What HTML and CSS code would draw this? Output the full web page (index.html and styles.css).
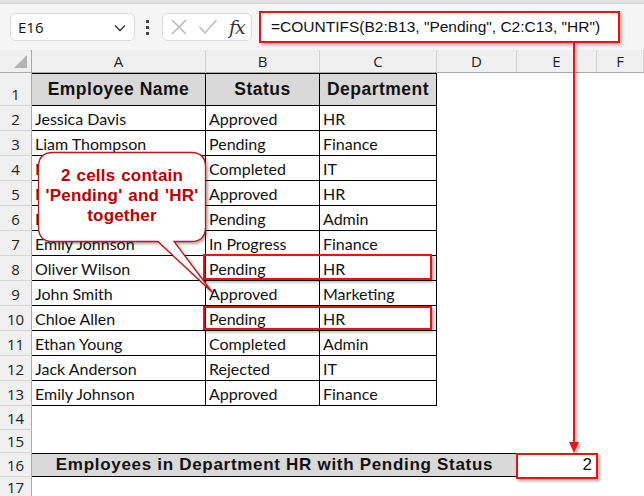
FILE: index.html
```html
<!DOCTYPE html>
<html>
<head>
<meta charset="utf-8">
<link rel="stylesheet" href="styles.css">
</head>
<body>
<div class="app">
  <div class="topstrip"></div>
  <div class="fbar">
    <div class="namebox">
      <span>E16</span>
      <svg class="chev" width="12" height="8" viewBox="0 0 12 8"><path d="M1 1.5 L6 6.5 L11 1.5" fill="none" stroke="#333" stroke-width="1.4"/></svg>
    </div>
    <div class="dots"><i></i><i></i><i></i></div>
    <div class="fxbox">
      <svg width="18" height="18" viewBox="0 0 18 18"><path d="M2 2 L16 16 M16 2 L2 16" stroke="#b9b9b9" stroke-width="1.5"/></svg>
      <svg width="20" height="18" viewBox="0 0 20 18"><path d="M1.5 9 L7 15 L18.5 2" fill="none" stroke="#b9b9b9" stroke-width="1.5"/></svg>
      <span class="fx">fx</span>
    </div>
    <div class="formula">=COUNTIFS(B2:B13, "Pending", C2:C13, "HR")</div>
  </div>

  <div class="sheet">
    <div class="r hc">
      <div class="corner"><span class="tri"></span></div>
      <div class="ch">A</div><div class="ch">B</div><div class="ch">C</div><div class="ch">D</div><div class="ch">E</div><div class="ch">F</div>
    </div>
    <div class="r h1">
      <div class="rh">1</div>
      <div class="t hd">Employee Name</div><div class="t hd">Status</div><div class="t hd">Department</div>
      <div class="c"></div><div class="c"></div><div class="c"></div>
    </div>
    <div class="r">
      <div class="rh">2</div><div class="t">Jessica Davis</div><div class="t">Approved</div><div class="t">HR</div><div class="c"></div><div class="c"></div><div class="c"></div>
    </div>
    <div class="r">
      <div class="rh">3</div><div class="t">Liam Thompson</div><div class="t">Pending</div><div class="t">Finance</div><div class="c"></div><div class="c"></div><div class="c"></div>
    </div>
    <div class="r">
      <div class="rh">4</div><div class="t">Noah Brown</div><div class="t">Completed</div><div class="t">IT</div><div class="c"></div><div class="c"></div><div class="c"></div>
    </div>
    <div class="r">
      <div class="rh">5</div><div class="t">Mia Clark</div><div class="t">Approved</div><div class="t">HR</div><div class="c"></div><div class="c"></div><div class="c"></div>
    </div>
    <div class="r">
      <div class="rh">6</div><div class="t">Lucas Martin</div><div class="t">Pending</div><div class="t">Admin</div><div class="c"></div><div class="c"></div><div class="c"></div>
    </div>
    <div class="r">
      <div class="rh">7</div><div class="t">Emily Johnson</div><div class="t">In Progress</div><div class="t">Finance</div><div class="c"></div><div class="c"></div><div class="c"></div>
    </div>
    <div class="r">
      <div class="rh">8</div><div class="t">Oliver Wilson</div><div class="t">Pending</div><div class="t">HR</div><div class="c"></div><div class="c"></div><div class="c"></div>
    </div>
    <div class="r">
      <div class="rh">9</div><div class="t">John Smith</div><div class="t">Approved</div><div class="t">Marketing</div><div class="c"></div><div class="c"></div><div class="c"></div>
    </div>
    <div class="r">
      <div class="rh">10</div><div class="t">Chloe Allen</div><div class="t">Pending</div><div class="t">HR</div><div class="c"></div><div class="c"></div><div class="c"></div>
    </div>
    <div class="r">
      <div class="rh">11</div><div class="t">Ethan Young</div><div class="t">Completed</div><div class="t">Admin</div><div class="c"></div><div class="c"></div><div class="c"></div>
    </div>
    <div class="r">
      <div class="rh">12</div><div class="t">Jack Anderson</div><div class="t">Rejected</div><div class="t">IT</div><div class="c"></div><div class="c"></div><div class="c"></div>
    </div>
    <div class="r">
      <div class="rh">13</div><div class="t">Emily Johnson</div><div class="t">Approved</div><div class="t">Finance</div><div class="c"></div><div class="c"></div><div class="c"></div>
    </div>
    <div class="r h14">
      <div class="rh">14</div><div class="c"></div><div class="c"></div><div class="c"></div><div class="c"></div><div class="c"></div><div class="c"></div>
    </div>
    <div class="r h15">
      <div class="rh">15</div><div class="c"></div><div class="c"></div><div class="c"></div><div class="c"></div><div class="c"></div><div class="c"></div>
    </div>
    <div class="r h16">
      <div class="rh">16</div>
      <div class="merged">Employees in Department HR with Pending Status</div>
      <div class="result">2</div>
      <div class="c"></div>
    </div>
    <div class="r h17">
      <div class="rh">17</div><div class="c"></div><div class="c"></div><div class="c"></div><div class="c"></div><div class="c"></div><div class="c"></div>
    </div>

    <div class="hl hl8"></div>
    <div class="hl hl10"></div>
    <div class="hl hlE"></div>
  </div>

  <svg class="overlay" width="644" height="496" viewBox="0 0 644 496">
    <defs>
      <filter id="sh" x="-20%" y="-20%" width="140%" height="140%">
        <feDropShadow dx="2" dy="2" stdDeviation="1.2" flood-color="#000" flood-opacity="0.3"/>
      </filter>
    </defs>
    <g filter="url(#sh)">
      <line x1="574" y1="43" x2="574" y2="444" stroke="#e8141c" stroke-width="2"/>
      <polygon points="569,442 579,442 574,453" fill="#e8141c"/>
    </g>
    <path filter="url(#sh)" d="M53 152.5 H191 Q205.5 152.5 205.5 167 V227 Q205.5 241.5 191 241.5 H174 L212 292 L158 241.5 H53 Q38.5 241.5 38.5 227 V167 Q38.5 152.5 53 152.5 Z" fill="#fff" stroke="#c0141c" stroke-width="1.3"/>
  </svg>
  <div class="callout">2 cells contain<br>'Pending' and 'HR'<br>together</div>
</div>
</body>
</html>
```

FILE: styles.css
```css
html, body {
  margin: 0;
  padding: 0;
  background: #fff;
}

.app {
  position: relative;
  width: 644px;
  height: 496px;
  overflow: hidden;
  background: #fff;
  font-family: "Liberation Sans", Arial, sans-serif;
}

.topstrip {
  height: 3px;
  background: #e3e3e3;
  border-bottom: 1px solid #d4d4d4;
}

.fbar {
  height: 46px;
  box-sizing: border-box;
  display: flex;
  align-items: center;
  padding-left: 10px;
  background: #f5f5f5;
}

.namebox {
  width: 125px;
  height: 28px;
  box-sizing: border-box;
  background: #fff;
  border: 1px solid #dcdcdc;
  border-radius: 6px;
  display: flex;
  align-items: center;
  justify-content: space-between;
  padding: 0 8px 0 7px;
  margin-right: 10px;
  font-family: "Open Sans", sans-serif;
  font-size: 15px;
  color: #111;
}

.chev {
  margin-top: 2px;
}

.dots {
  width: 4px;
  display: flex;
  flex-direction: column;
  gap: 3px;
  align-items: center;
  margin-right: 13px;
}

.dots i {
  display: block;
  width: 3px;
  height: 3px;
  background: #444;
}

.fxbox {
  width: 90px;
  height: 28px;
  box-sizing: border-box;
  background: #fff;
  border: 1px solid #dcdcdc;
  border-radius: 6px;
  display: flex;
  align-items: center;
  padding-left: 7px;
  gap: 10px;
  margin-right: 7px;
}

.fx {
  font-family: "DejaVu Serif", "Liberation Serif", serif;
  font-style: italic;
  font-size: 19px;
  color: #333;
  margin-left: 1px;
  letter-spacing: -1px;
}

.formula {
  width: 361px;
  height: 32px;
  box-sizing: border-box;
  background: #fff;
  border: 2.5px solid #ee1111;
  box-shadow: 2px 2px 3px rgba(0, 0, 0, 0.3);
  display: flex;
  align-items: center;
  padding-left: 10px;
  font-size: 15.5px;
  color: #111;
  white-space: nowrap;
}

.sheet {
  position: relative;
}

.r {
  display: grid;
  grid-template-columns: 32px 174px 114px 117px 80px 80px 47px;
  height: 25px;
}

.r > div {
  box-sizing: border-box;
}

.hc {
  height: 23px;
}

.h1 {
  height: 33px;
}

.h14 {
  height: 24px;
}

.h15 {
  height: 23px;
}

.h16 {
  height: 24px;
}

.h17 {
  height: 19px;
}

.corner {
  background: #f0f0f0;
  border-right: 1px solid #a9a9a9;
  border-bottom: 1px solid #a9a9a9;
  position: relative;
}

.tri {
  position: absolute;
  right: 4px;
  bottom: 4px;
  width: 0;
  height: 0;
  border-left: 13px solid transparent;
  border-bottom: 13px solid #b4b4b4;
}

.ch {
  background: #f0f0f0;
  border-right: 1px solid #d2d2d2;
  border-bottom: 1px solid #a9a9a9;
  font-family: "Open Sans", sans-serif;
  font-size: 15px;
  color: #222;
  text-align: center;
  line-height: 22px;
}

.rh {
  background: #f0f0f0;
  border-right: 1px solid #a9a9a9;
  border-bottom: 1px solid #d6d6d6;
  font-family: "Open Sans", sans-serif;
  font-size: 15px;
  color: #222;
  text-align: center;
  display: flex;
  align-items: flex-end;
  justify-content: center;
  padding-bottom: 1px;
}

.t {
  border-right: 1px solid #000;
  border-bottom: 1px solid #000;
  font-family: "Lato", sans-serif;
  font-size: 16px;
  color: #111;
  padding-left: 3px;
  display: flex;
  align-items: flex-end;
  padding-bottom: 2px;
  white-space: nowrap;
  overflow: hidden;
}

.hd {
  background: #d9d9d9;
  border-top: 1px solid #000;
  font-family: "Liberation Sans", Arial, sans-serif;
  font-weight: bold;
  font-size: 17.5px;
  letter-spacing: 0.5px;
  justify-content: center;
  padding-left: 0;
  align-items: center;
  padding-bottom: 0;
}

.c {
  background: #fff;
}

.merged {
  grid-column: span 4;
  background: #d9d9d9;
  border-top: 1px solid #000;
  border-bottom: 1px solid #000;
  font-weight: bold;
  font-size: 17px;
  letter-spacing: 0.7px;
  color: #111;
  text-align: center;
  line-height: 22px;
}

.result {
  background: #fff;
  text-align: right;
  padding-right: 5px;
  font-size: 17px;
  line-height: 24px;
  color: #111;
}

.hl {
  position: absolute;
  box-sizing: border-box;
  border: 2.5px solid #ee1111;
  box-shadow: 2px 2px 3px rgba(0, 0, 0, 0.35);
}

.hl8 {
  left: 203px;
  top: 204px;
  width: 229px;
  height: 26px;
}

.hl10 {
  left: 203px;
  top: 256px;
  width: 229px;
  height: 24px;
}

.hlE {
  left: 516px;
  top: 403px;
  width: 82px;
  height: 26px;
}

.overlay {
  position: absolute;
  left: 0;
  top: 0;
  pointer-events: none;
}

.callout {
  position: absolute;
  left: 38px;
  top: 166px;
  width: 168px;
  text-align: center;
  font-weight: bold;
  font-size: 17px;
  letter-spacing: 0.2px;
  word-spacing: 1px;
  line-height: 20px;
  color: #c00000;
}
```
